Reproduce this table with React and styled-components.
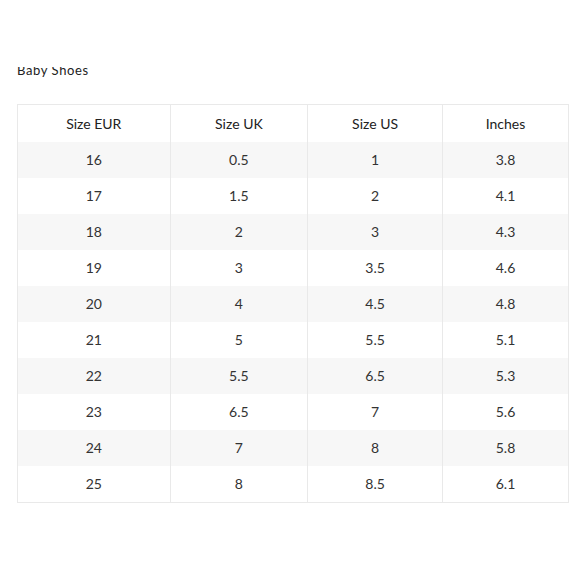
import React from "react";
import styled, { createGlobalStyle } from "styled-components";

const Global = createGlobalStyle`
  body {
    margin: 0;
    background: #fff;
    font-family: Lato, "Open Sans", sans-serif;
    color: #2b2b2b;
  }
`;

const Page = styled.div`
  padding: 67px 11px 0 17px;
`;

const TitleClip = styled.div`
  height: 12px;
  overflow: hidden;
`;

const Title = styled.div`
  font-size: 13px;
  line-height: 13px;
  margin-top: -3px;
  letter-spacing: 0.6px;
  color: #222;
`;

const Table = styled.table`
  margin-top: 25px;
  width: 552px;
  border-collapse: collapse;
  border: 1px solid #e9e9e9;
  font-size: 14px;
`;

const HeadCell = styled.th`
  font-weight: 400;
  height: 36px;
  padding: 0 0 1px;
  text-align: center;
  border-left: 1px solid #e9e9e9;
  color: #222;
`;

const Row = styled.tr`
  background: ${props => (props.shaded ? "#f7f7f7" : "#fff")};
`;

const Cell = styled.td`
  height: 34px;
  padding: 0 0 2px;
  text-align: center;
  border-left: 1px solid #e9e9e9;
  color: #333;
`;

const columns = [
  { label: "Size EUR", width: 153 },
  { label: "Size UK", width: 138 },
  { label: "Size US", width: 135 },
  { label: "Inches", width: 126 },
];

const sizes = [
  ["16", "0.5", "1", "3.8"],
  ["17", "1.5", "2", "4.1"],
  ["18", "2", "3", "4.3"],
  ["19", "3", "3.5", "4.6"],
  ["20", "4", "4.5", "4.8"],
  ["21", "5", "5.5", "5.1"],
  ["22", "5.5", "6.5", "5.3"],
  ["23", "6.5", "7", "5.6"],
  ["24", "7", "8", "5.8"],
  ["25", "8", "8.5", "6.1"],
];

export default function App() {
  return (
    <Page>
      <Global />
      <TitleClip>
        <Title>Baby Shoes</Title>
      </TitleClip>
      <Table>
        <thead>
          <tr>
            {columns.map(c => (
              <HeadCell key={c.label} style={{ width: c.width }}>
                {c.label}
              </HeadCell>
            ))}
          </tr>
        </thead>
        <tbody>
          {sizes.map((row, i) => (
            <Row key={row[0]} shaded={i % 2 === 0}>
              {row.map((v, j) => (
                <Cell key={j}>{v}</Cell>
              ))}
            </Row>
          ))}
        </tbody>
      </Table>
    </Page>
  );
}
